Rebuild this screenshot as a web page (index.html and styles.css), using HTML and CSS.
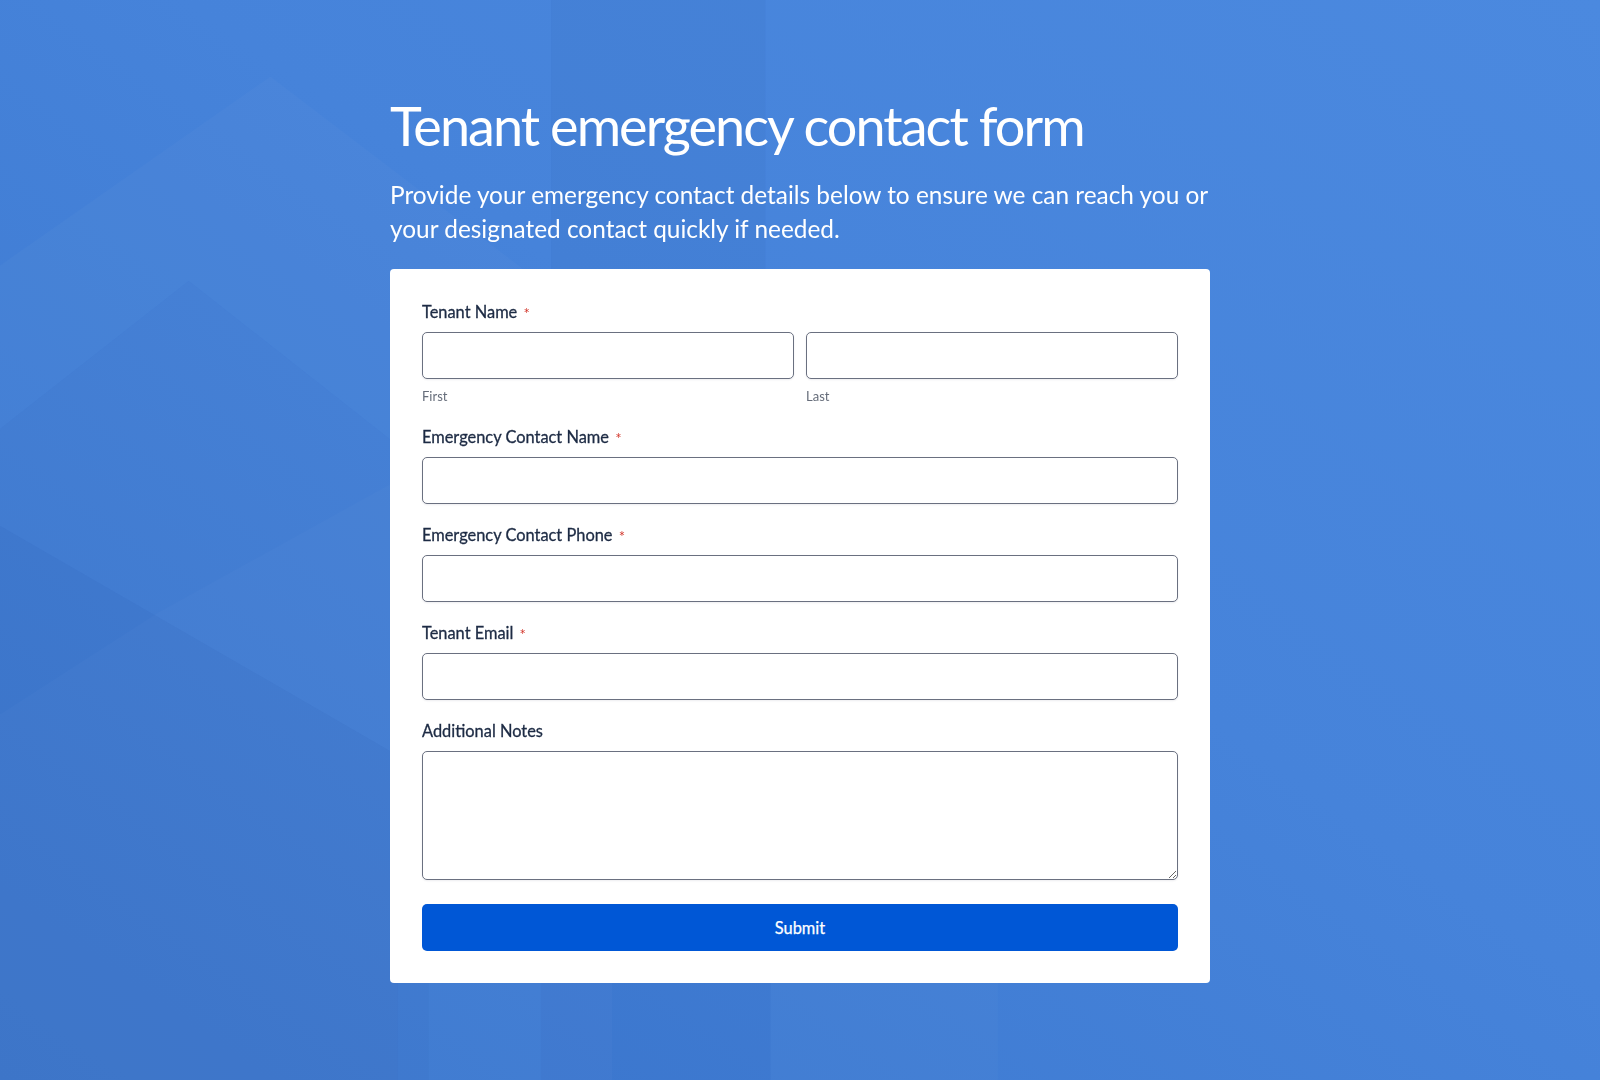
FILE: index.html
```html
<!DOCTYPE html>
<html lang="en">
<head>
<meta charset="utf-8">
<title>Tenant emergency contact form</title>
<link rel="stylesheet" href="styles.css">
</head>
<body>
<svg class="backdrop" viewBox="0 0 1568 1058" preserveAspectRatio="none" aria-hidden="true">
  <polygon points="540,0 750,0 750,270 540,270" fill="#1a3f8f" fill-opacity="0.05"/>
  <polygon points="265,75 600,330 600,1058 0,1058 0,260" fill="#ffffff" fill-opacity="0.025"/>
  <polygon points="185,275 420,460 420,1058 0,1058 0,420" fill="#1a3f8f" fill-opacity="0.035"/>
  <polygon points="0,515 390,740 390,1058 0,1058" fill="#1a3f8f" fill-opacity="0.05"/>
  <polygon points="155,600 390,470 390,1058 0,1058 0,700" fill="#ffffff" fill-opacity="0.02"/>
  <polygon points="530,960 755,960 755,1058 530,1058" fill="#1a3f8f" fill-opacity="0.04"/>
  <polygon points="755,960 978,960 978,1058 755,1058" fill="#ffffff" fill-opacity="0.02"/>
</svg>
<main class="page">
  <h1 class="title">Tenant emergency contact form</h1>
  <p class="intro">Provide your emergency contact details below to ensure we can reach you or your designated contact quickly if needed.</p>
  <form class="card">
    <div class="field field-name">
      <div class="label">Tenant Name <span class="req">*</span></div>
      <div class="name-row">
        <div class="name-col">
          <input class="input" type="text">
          <div class="sublabel">First</div>
        </div>
        <div class="name-col">
          <input class="input" type="text">
          <div class="sublabel">Last</div>
        </div>
      </div>
    </div>
    <div class="field">
      <label class="label">Emergency Contact Name <span class="req">*</span></label>
      <input class="input" type="text">
    </div>
    <div class="field">
      <label class="label">Emergency Contact Phone <span class="req">*</span></label>
      <input class="input" type="tel">
    </div>
    <div class="field">
      <label class="label">Tenant Email <span class="req">*</span></label>
      <input class="input" type="email">
    </div>
    <div class="field">
      <label class="label">Additional Notes</label>
      <textarea class="input textarea"></textarea>
    </div>
    <button class="submit" type="button">Submit</button>
  </form>
</main>
</body>
</html>
```
FILE: styles.css
```css
html, body {
  margin: 0;
  padding: 0;
  min-height: 100%;
}
body {
  font-family: Lato, "Noto Sans", sans-serif;
  background: linear-gradient(215deg, #4b89df 0%, #4683da 45%, #3a76cd 100%);
  min-height: 1080px;
  color: #1d2b44;
}
.backdrop {
  position: fixed;
  inset: 0;
  width: 100%;
  height: 100%;
  z-index: 0;
}
.page {
  position: relative;
  z-index: 1;
  width: 820px;
  margin: 0 auto;
  padding-top: 92px;
  padding-bottom: 40px;
}
.title {
  margin: 0;
  font-size: 54px;
  line-height: 67px;
  font-weight: 400;
  letter-spacing: -1.95px;
  color: #ffffff;
}
.intro {
  margin: 19px 0 0;
  font-size: 24.4px;
  line-height: 34px;
  font-weight: 400;
  color: #ffffff;
}
.card {
  margin-top: 23px;
  background: #ffffff;
  border-radius: 4px;
  padding: 32px;
  display: flex;
  flex-direction: column;
}
.field {
  display: flex;
  flex-direction: column;
  margin-bottom: 20px;
}
.field-name {
  margin-bottom: 21px;
}
.label {
  display: block;
  font-size: 16.4px;
  line-height: 22px;
  font-weight: 400;
  -webkit-text-stroke: 0.3px #1d2b44;
  color: #1d2b44;
  margin-bottom: 9px;
}
.label:last-of-type {
  margin-bottom: 9px;
}
.req {
  color: #d3372c;
  -webkit-text-stroke: 0;
  font-size: 15px;
  line-height: 0;
  margin-left: 2px;
  vertical-align: -1px;
}
.name-row {
  display: grid;
  grid-template-columns: 1fr 1fr;
  gap: 12px;
}
.name-col {
  display: flex;
  flex-direction: column;
}
.sublabel {
  margin-top: 9px;
  font-size: 13px;
  line-height: 17px;
  color: #666d7a;
}
.input {
  display: block;
  box-sizing: border-box;
  width: 100%;
  height: 47px;
  margin: 0;
  border: 1px solid #6a7080;
  border-radius: 5px;
  background: #ffffff;
  box-shadow: 0 1px 2px rgba(20, 30, 60, 0.08);
  font-family: Lato, sans-serif;
  font-size: 16px;
  padding: 0 12px;
}
.textarea {
  height: 129px;
  resize: vertical;
  padding: 10px 12px;
}
.submit {
  margin-top: 4px;
  height: 47px;
  border: none;
  border-radius: 5px;
  background: #0057d6;
  color: #ffffff;
  font-family: Lato, sans-serif;
  font-size: 16.4px;
  font-weight: 400;
  -webkit-text-stroke: 0.25px #ffffff;
  cursor: pointer;
}
```
